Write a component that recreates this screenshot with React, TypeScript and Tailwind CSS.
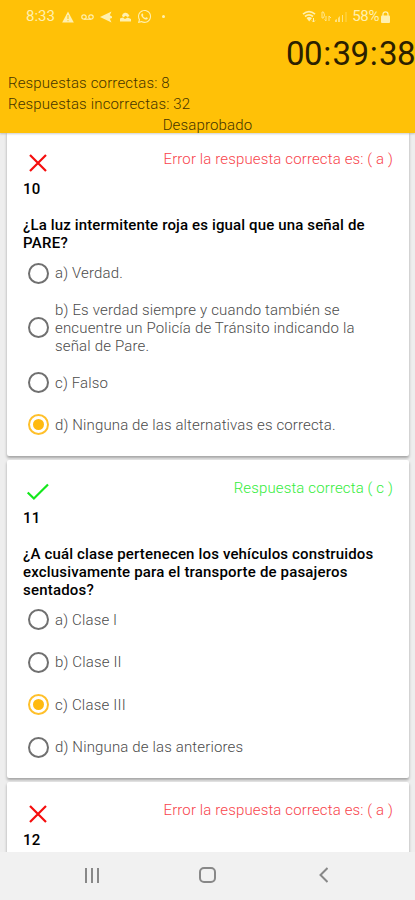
import clsx from "clsx";
import { FaWhatsapp } from "react-icons/fa";

type Option = {
    text: string;
    lines?: string[];
    tracking: string;
};

type Question = {
    number: number;
    correct: boolean;
    message: string;
    lines: { text: string; tracking: string }[];
    options: Option[];
    selected: number;
};

const questions: Question[] = [
    {
        number: 10,
        correct: false,
        message: "Error la respuesta correcta es: ( a )",
        lines: [
            {
                text: "¿La luz intermitente roja es igual que una señal de",
                tracking: "tracking-[0.14px]",
            },
            { text: "PARE?", tracking: "tracking-[0.3px]" },
        ],
        options: [
            { text: "a) Verdad.", tracking: "tracking-[0.15px]" },
            {
                text: "b) Es verdad siempre y cuando también se",
                lines: [
                    "encuentre un Policía de Tránsito indicando la",
                    "señal de Pare.",
                ],
                tracking: "tracking-[0.17px]",
            },
            { text: "c) Falso", tracking: "tracking-[0.15px]" },
            {
                text: "d) Ninguna de las alternativas es correcta.",
                tracking: "tracking-[0.13px]",
            },
        ],
        selected: 3,
    },
    {
        number: 11,
        correct: true,
        message: "Respuesta correcta ( c )",
        lines: [
            {
                text: "¿A cuál clase pertenecen los vehículos construidos",
                tracking: "tracking-[0.16px]",
            },
            {
                text: "exclusivamente para el transporte de pasajeros",
                tracking: "tracking-[0.17px]",
            },
            { text: "sentados?", tracking: "tracking-[0.2px]" },
        ],
        options: [
            { text: "a) Clase I", tracking: "tracking-[0.15px]" },
            { text: "b) Clase II", tracking: "tracking-[0.15px]" },
            { text: "c) Clase III", tracking: "tracking-[0.2px]" },
            {
                text: "d) Ninguna de las anteriores",
                tracking: "tracking-[0.15px]",
            },
        ],
        selected: 2,
    },
    {
        number: 12,
        correct: false,
        message: "Error la respuesta correcta es: ( a )",
        lines: [],
        options: [],
        selected: -1,
    },
];

const StatusBar: React.FC = () => (
    <div className="flex h-[33px] items-center justify-between pr-[25px] pl-[26px] text-[#fff0b0]">
        <div className="flex items-center">
            <span className="w-[36px] text-[15px] leading-none">8:33</span>
            <svg className="h-3 w-3" viewBox="0 0 12 12">
                <path d="M6 .5 11.8 11.5H.2Z" fill="currentColor" />
                <path d="M6 4v4M6 9.2v1" stroke="#ffc107" />
            </svg>
            <svg
                className="ml-[7px] h-[6px] w-[13px]"
                viewBox="0 0 13 6"
                fill="none"
                stroke="currentColor"
                strokeWidth="1.2"
            >
                <circle cx="3" cy="3" r="2.2" />
                <circle cx="10" cy="3" r="2.2" />
                <path d="M3 5.2h7" />
            </svg>
            <svg
                className="ml-[6px] h-3 w-[13px]"
                viewBox="0 0 13 12"
                fill="currentColor"
            >
                <path d="M0 6 11.5.5 9.8 4.3 12 5.5v1.4L9.8 7.7l1.7 3.8Z" />
            </svg>
            <svg
                className="ml-[7px] h-[10px] w-[11px]"
                viewBox="0 0 11 10"
                fill="currentColor"
            >
                <path d="M2 3.8A3.6 3.6 0 0 1 8.6 2.4L9.5 4 7.5 5 5.5 3.8 3.3 5.4ZM0 9.5V6.6l2.5-1L5 7l2.6-1.6L11 7v2.5Z" />
            </svg>
            <FaWhatsapp className="ml-[6px] size-[15px]" />
            <span className="ml-[10px] size-[3px] rounded-full bg-current" />
        </div>
        <div className="flex items-center">
            <svg className="h-[13px] w-[15px]" viewBox="0 0 15 13" fill="none">
                <path
                    d="M1 4.2Q7 -1 13 4.2M3 6.5q4-3.4 8 0"
                    stroke="currentColor"
                    strokeWidth="1.7"
                />
                <path d="m4.5 8 2.7 3.4L10 8Q7 5.8 4.5 8Z" fill="currentColor" />
                <path d="M11.5 8v4m-1.5-1.5 1.5 1.5 1.5-1.5" stroke="currentColor" />
            </svg>
            <svg
                className="ml-[4px] h-[11px] w-[11px] opacity-80"
                viewBox="0 0 11 11"
                fill="none"
                stroke="currentColor"
            >
                <path d="M1 1v6h1.5Q4.5 4 2.5 1ZM5 10V5m-1.5 3.5L5 10M8 5v5m0-5 2 2" />
            </svg>
            <svg
                className="ml-[3px] h-[11px] w-[12px]"
                viewBox="0 0 12 11"
                fill="currentColor"
            >
                <path d="M0 11V9l2-1v3ZM3 11V7l2-2v6ZM7 11V4h1v7Z" opacity=".7" />
                <path d="M10.5 11V1h1v10Z" opacity=".45" />
            </svg>
            <span className="ml-[5px] text-[15px] leading-none tracking-[-0.4px]">
                58%
            </span>
            <svg className="ml-[2px] h-3 w-[9px]" viewBox="0 0 9 12">
                <rect y="4.5" width="9" height="7.5" rx="1" fill="currentColor" />
                <path
                    d="M2 5V3.3a2.5 2.5 0 0 1 5 0V5"
                    fill="none"
                    stroke="currentColor"
                    strokeWidth="1.3"
                />
            </svg>
        </div>
    </div>
);

const Timer: React.FC<{ value: string }> = ({ value }) => (
    <div className="flex h-[40px] items-center justify-end text-[33px] leading-none text-[#2b2000]">
        {value.split("").map((char, index) => (
            <span
                key={index}
                className={clsx(
                    "text-center",
                    char === ":" ? "w-[10.5px]" : "w-[18px]",
                )}
            >
                {char}
            </span>
        ))}
    </div>
);

const Header: React.FC = () => (
    <header className="relative z-10 h-[133px] shrink-0 bg-[#ffc107] text-[#453400] shadow-[0_1px_2px_rgba(0,0,0,0.2)]">
        <StatusBar />
        <Timer value="00:39:38" />
        <div className="text-[15px] leading-[21px] font-light tracking-[0.16px] whitespace-nowrap">
            <p className="pl-[8px]">Respuestas correctas: 8</p>
            <p className="pl-[8px]">Respuestas incorrectas: 32</p>
            <p className="text-center">Desaprobado</p>
        </div>
    </header>
);

const Mark: React.FC<{ correct: boolean }> = ({ correct }) => (
    <svg
        className="ml-[3px] size-6"
        viewBox="0 0 24 24"
        fill="none"
        stroke={correct ? "#14e81c" : "#f50d0d"}
        strokeWidth="2.2"
    >
        {correct ? (
            <path d="m1.7 12.5 6.2 6L22 4.5" />
        ) : (
            <path d="m4 4 16 16M20 4 4 20" />
        )}
    </svg>
);

const Radio: React.FC<{ checked: boolean }> = ({ checked }) => (
    <span
        className={clsx(
            "flex size-[21px] shrink-0 items-center justify-center rounded-full border-2",
            checked ? "border-[#ffc02b]" : "border-[#707070]",
        )}
    >
        {checked && <span className="size-[11px] rounded-full bg-[#ffba10]" />}
    </span>
);

const QuestionCard: React.FC<{ question: Question }> = ({ question }) => (
    <section className="mr-[6px] mb-[4px] ml-[7px] shrink-0 rounded-[2px] bg-white px-[16px] pt-[20px] pb-[9.5px] shadow-[0_2px_3px_rgba(0,0,0,0.32)]">
        <div className="flex h-6 justify-between">
            <Mark correct={question.correct} />
            <p
                className={clsx(
                    "-mt-[2px] text-[15px] leading-[20px] font-light tracking-[0.13px]",
                    question.correct ? "text-[#35ed3c]" : "text-[#f8444c]",
                )}
            >
                {question.message}
            </p>
        </div>
        <p className="mt-[5px] text-[15px] leading-[18px] font-medium tracking-[0.3px]">
            {question.number}
        </p>
        <h2 className="mt-[18px] text-[15px] leading-[18px] font-medium whitespace-nowrap">
            {question.lines.map((line) => (
                <span key={line.text} className={clsx("block", line.tracking)}>
                    {line.text}
                </span>
            ))}
        </h2>
        <ul>
            {question.options.map((option, index) => (
                <li
                    key={option.text}
                    className={clsx(
                        "flex items-center gap-[6px] pl-[5px] text-[15px] leading-[18px] font-light whitespace-nowrap text-[#4b4b4b]",
                        option.lines ? "h-[67px]" : "h-[42.4px]",
                        option.tracking,
                    )}
                >
                    <Radio checked={index === question.selected} />
                    <span>
                        {option.text}
                        {option.lines?.map((line) => (
                            <span key={line} className="block">
                                {line}
                            </span>
                        ))}
                    </span>
                </li>
            ))}
        </ul>
    </section>
);

const NavigationBar: React.FC = () => (
    <nav className="relative z-10 flex h-[48px] shrink-0 items-center bg-[#f1f1f1] px-[34px] pb-[2px] text-[#888]">
        <div className="flex flex-1 justify-center gap-[4px]">
            <span className="h-[15px] w-[2px] bg-current" />
            <span className="h-[15px] w-[2px] bg-current" />
            <span className="h-[15px] w-[2px] bg-current" />
        </div>
        <div className="flex flex-1 justify-center">
            <span className="h-[16px] w-[17px] rounded-[5px] border-2 border-current" />
        </div>
        <div className="flex flex-1 justify-center">
            <svg
                className="h-4 w-[10px]"
                viewBox="0 0 10 16"
                fill="none"
                stroke="currentColor"
                strokeWidth="2"
            >
                <path d="M9.5 1 2.5 8l7 7" />
            </svg>
        </div>
    </nav>
);

export default function App() {
    return (
        <div className="flex h-[900px] w-[415px] flex-col overflow-hidden bg-[#eee] font-[Roboto,sans-serif] text-black">
            <Header />
            <main className="-mt-[2px] flex min-h-0 flex-1 flex-col overflow-hidden">
                {questions.map((question) => (
                    <QuestionCard key={question.number} question={question} />
                ))}
            </main>
            <NavigationBar />
        </div>
    );
}
